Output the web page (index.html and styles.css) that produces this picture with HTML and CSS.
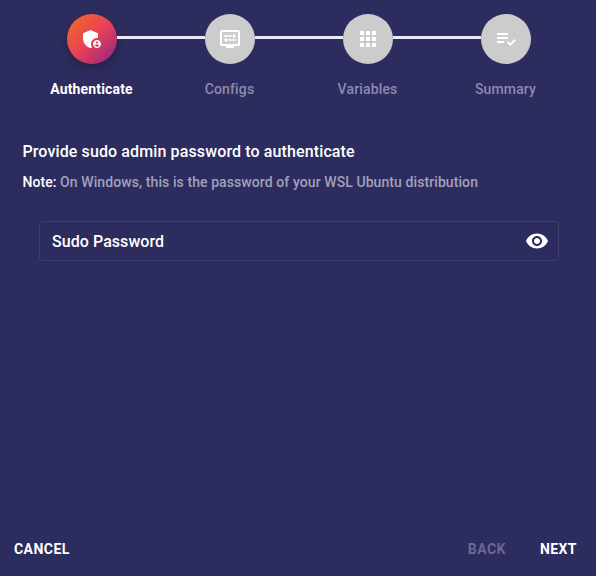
FILE: index.html
```html
<!DOCTYPE html>
<html lang="en">
<head>
<meta charset="utf-8">
<title>Authenticate</title>
<link rel="stylesheet" href="styles.css">
</head>
<body>
<main class="wizard">
  <ol class="stepper">
    <li class="step active">
      <span class="step-icon"><svg viewBox="0 0 24 24"><path d="M17 11c.34 0 .67.04 1 .09V6.27L10.5 3 3 6.27v4.91c0 4.54 3.2 8.79 7.5 9.82.55-.13 1.08-.32 1.6-.55-.69-.98-1.1-2.17-1.1-3.45 0-3.31 2.69-6 6-6z"/><path d="M17 13c-2.21 0-4 1.79-4 4s1.79 4 4 4 4-1.79 4-4-1.79-4-4-4zm0 1.38c.62 0 1.12.51 1.12 1.12s-.51 1.12-1.12 1.12-1.12-.51-1.12-1.12.5-1.12 1.12-1.12zm0 5.37c-.93 0-1.74-.46-2.24-1.17.05-.72 1.51-1.08 2.24-1.08s2.19.36 2.24 1.08c-.5.71-1.31 1.17-2.24 1.17z"/></svg></span>
      <span class="step-label">Authenticate</span>
    </li>
    <li class="step">
      <span class="step-icon"><svg viewBox="0 0 24 24"><path d="M20 3H4c-1.11 0-2 .89-2 2v12c0 1.1.89 2 2 2h4v2h8v-2h4c1.1 0 2-.9 2-2V5c0-1.11-.9-2-2-2zm0 14H4V5h16v12z"/><path d="M6 8.25h8.5v1.5H6zM16.5 9.75H18v-1.5h-1.5V7H15v4h1.5zM10 12.25h8v1.5h-8zM7.5 15H9v-4H7.5v1.25H6v1.5h1.5z"/></svg></span>
      <span class="step-label">Configs</span>
    </li>
    <li class="step">
      <span class="step-icon"><svg viewBox="0 0 24 24"><path d="M4 8h4V4H4v4zm6 12h4v-4h-4v4zm-6 0h4v-4H4v4zm0-6h4v-4H4v4zm6 0h4v-4h-4v4zm6-10v4h4V4h-4zm-6 4h4V4h-4v4zm6 6h4v-4h-4v4zm0 6h4v-4h-4v4z"/></svg></span>
      <span class="step-label">Variables</span>
    </li>
    <li class="step">
      <span class="step-icon"><svg viewBox="0 0 24 24"><path d="M3 10h11v2H3zM3 6h11v2H3zM3 14h7v2H3zM20.59 11.93l-4.25 4.24-2.12-2.12-1.41 1.41L16.34 19 22 13.34z"/></svg></span>
      <span class="step-label">Summary</span>
    </li>
  </ol>
  <section class="content">
    <h1 class="title">Provide sudo admin password to authenticate</h1>
    <p class="note"><strong>Note:</strong> On Windows, this is the password of your WSL Ubuntu distribution</p>
    <div class="field">
      <span class="field-label">Sudo Password</span>
      <svg class="eye" viewBox="0 0 24 24"><path d="M12 4.5C7 4.5 2.73 7.61 1 12c1.73 4.39 6 7.5 11 7.5s9.27-3.11 11-7.5c-1.73-4.39-6-7.5-11-7.5zM12 17c-2.76 0-5-2.24-5-5s2.24-5 5-5 5 2.24 5 5-2.24 5-5 5zm0-8c-1.66 0-3 1.34-3 3s1.34 3 3 3 3-1.34 3-3-1.34-3-3-3z"/></svg>
    </div>
  </section>
  <footer class="actions">
    <button class="btn cancel">Cancel</button>
    <button class="btn" disabled>Back</button>
    <button class="btn">Next</button>
  </footer>
</main>
</body>
</html>
```
FILE: styles.css
```css
* { box-sizing: border-box; }

body {
  margin: 0;
  background: #2d2c5e;
  color: #fff;
  font-family: Roboto, "Liberation Sans", sans-serif;
  letter-spacing: 0.15px;
}

svg { fill: currentColor; width: 24px; height: 24px; display: block; }

.wizard { display: flex; flex-direction: column; height: 576px; }

.stepper {
  display: grid;
  grid-template-columns: repeat(4, 138px);
  margin: 0;
  padding: 14px 0 0 23px;
  list-style: none;
}

.step {
  position: relative;
  display: flex;
  flex-direction: column;
  align-items: center;
  color: #8c8aac;
}

.step + .step::before {
  content: "";
  position: absolute;
  top: 22px;
  left: -44px;
  width: 88px;
  height: 3px;
  background: #eaeaf8;
}

.step-icon {
  display: grid;
  place-items: center;
  width: 50px;
  height: 50px;
  border-radius: 50%;
  background: #ccc;
  color: #fff;
}

.active .step-icon {
  background: linear-gradient(136deg, rgb(242, 113, 33) 0%, rgb(233, 64, 87) 50%, rgb(138, 35, 135) 100%);
  box-shadow: 0 4px 10px rgba(0, 0, 0, 0.25);
}

.step-label {
  margin: 15px 1px 0 0;
  font-size: 14px;
  line-height: 20px;
  font-weight: 500;
}

.active .step-label { color: #fff; font-weight: 700; }

.content { flex: 1; padding: 41px 37px 0 22px; }

.title {
  margin: 0 0 0 0.4px;
  font-size: 16px;
  line-height: 24px;
  font-weight: 500;
  letter-spacing: 0.12px;
}

.note {
  margin: 8px 0 0 0.4px;
  font-size: 14px;
  line-height: 20px;
  font-weight: 500;
  letter-spacing: 0.085px;
  color: #a2a0bd;
}

.note strong { color: #fff; font-weight: 500; }

.field {
  display: flex;
  align-items: center;
  justify-content: space-between;
  height: 40px;
  margin: 29px 0 0 17px;
  padding: 0 9px 0 12px;
  border: 1px solid #403e70;
  border-radius: 4px;
  font-size: 16px;
  font-weight: 500;
  letter-spacing: 0.06px;
}

.actions { display: flex; padding: 0 11px 9px 6px; }

.btn {
  height: 36px;
  padding: 0 8px;
  border: 0;
  background: none;
  color: #fff;
  font: 700 14px/24px Roboto, "Liberation Sans", sans-serif;
  letter-spacing: 0.45px;
  text-transform: uppercase;
}

.btn + .btn { margin-left: 18px; }
.btn.cancel { margin-right: auto; }
.btn:disabled { color: #6b698f; }
```
